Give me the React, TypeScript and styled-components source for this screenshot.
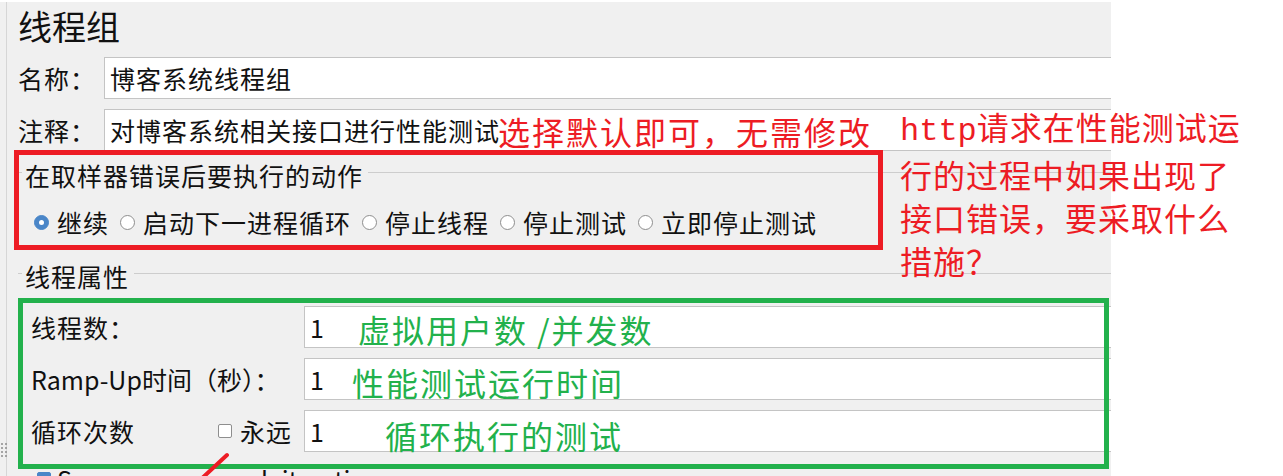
import React from "react";
import styled, { createGlobalStyle } from "styled-components";

const GlobalStyle = createGlobalStyle`
  html, body { margin: 0; padding: 0; background: #ffffff; overflow: hidden; }
  body { font-family: "Noto Sans CJK SC", "Microsoft YaHei", sans-serif; }
`;

const Screen = styled.div`
  position: relative;
  width: 1283px;
  height: 476px;
  overflow: hidden;
  background: #ffffff;
`;

const Window = styled.div`
  display: flex;
  width: 1111px;
  height: 474px;
  margin-top: 2px;
  background: #f0f0f0;
`;

const Splitter = styled.div`
  position: relative;
  flex: none;
  width: 6px;
  border-right: 1px solid #d6d6d6;
`;

const Grip = styled.div`
  position: absolute;
  left: 1px;
  top: 441px;
  display: grid;
  grid-template-columns: repeat(2, 2px);
  gap: 2px;
`;

const GripDot = styled.span`
  width: 2px;
  height: 2px;
  border-radius: 1px;
  background: #8c8c8c;
`;

const Panel = styled.div`
  flex: 1;
  min-width: 0;
  overflow: hidden;
  padding-left: 11px;
  display: flex;
  flex-direction: column;
  color: #111111;
  font-size: 25px;
  letter-spacing: 1px;
  white-space: nowrap;
`;

const Title = styled.h1`
  margin: 0;
  font-size: 34px;
  font-weight: 400;
  line-height: 48px;
  letter-spacing: 0;
`;

const FieldRow = styled.div<{ $mt: number }>`
  display: flex;
  align-items: center;
  margin-top: ${(p) => p.$mt}px;
`;

const LabelCell = styled.div<{ $width: number }>`
  flex: none;
  width: ${(p) => p.$width}px;
  display: flex;
  align-items: center;
  justify-content: space-between;
`;

const Field = styled.div`
  flex: 1;
  min-width: 0;
  height: 42px;
  box-sizing: border-box;
  margin-right: -20px;
  padding-left: 5px;
  background: #ffffff;
  border: 1px solid #c4c4c4;
  display: flex;
  align-items: center;
`;

const Value = styled.span`
  letter-spacing: 0;
`;

const Note = styled.span<{ $color: string; $indent: number; $dy: number }>`
  margin-left: ${(p) => p.$indent}px;
  margin-top: ${(p) => p.$dy}px;
  font-size: 32px;
  line-height: 32px;
  letter-spacing: 2px;
  color: ${(p) => p.$color};
`;

const GroupHeader = styled.div<{ $mt: number }>`
  display: flex;
  align-items: center;
  height: 32px;
  margin-top: ${(p) => p.$mt}px;

  &::before {
    content: "";
    width: 4px;
    height: 1px;
    margin: -6px 3px 0 0;
    background: #cdcdcd;
  }

  &::after {
    content: "";
    flex: 1;
    height: 1px;
    margin: -6px 0 0 5px;
    background: #cdcdcd;
  }
`;

const RadioRow = styled.div`
  display: flex;
  align-items: center;
  gap: 11px;
  height: 36px;
  margin-top: 13px;
  padding-left: 16px;
`;

const RadioOption = styled.label`
  display: flex;
  align-items: center;
  gap: 8px;
`;

const Radio = styled.span<{ $checked?: boolean }>`
  flex: none;
  width: 15px;
  height: 15px;
  box-sizing: border-box;
  border-radius: 50%;
  border: 1px solid ${(p) => (p.$checked ? "#4a86c8" : "#8e8e8e")};
  background: ${(p) => (p.$checked ? "#4a86c8" : "#ffffff")};
  display: flex;
  align-items: center;
  justify-content: center;

  &::after {
    content: "";
    display: ${(p) => (p.$checked ? "block" : "none")};
    width: 5px;
    height: 5px;
    border-radius: 50%;
    background: #ffffff;
  }
`;

const PropsBody = styled.div`
  display: flex;
  flex-direction: column;
  padding-left: 13px;
`;

const CheckGroup = styled.span`
  display: flex;
  align-items: center;
  gap: 8px;
  margin-right: 12px;
`;

const Checkbox = styled.span<{ $checked?: boolean }>`
  flex: none;
  width: 14px;
  height: 14px;
  box-sizing: border-box;
  border-radius: 2px;
  border: 1px solid ${(p) => (p.$checked ? "#4a86c8" : "#8e8e8e")};
  background: ${(p) => (p.$checked ? "#4a86c8" : "#ffffff")};
`;

const CheckRow = styled.div`
  display: flex;
  align-items: center;
  gap: 6px;
  height: 36px;
  margin-top: 9px;
  padding-left: 6px;
  letter-spacing: 0;
`;

const Frame = styled.div<{ $color: string }>`
  position: absolute;
  box-sizing: border-box;
  border: 5px solid ${(p) => p.$color};
  pointer-events: none;
`;

const RedFrame = styled(Frame)`
  left: 14px;
  top: 150px;
  width: 869px;
  height: 100px;
`;

const GreenFrame = styled(Frame)`
  left: 18px;
  top: 298px;
  width: 1091px;
  height: 171px;
`;

const SideNote = styled.div`
  position: absolute;
  left: 900px;
  top: 105px;
  font-size: 32px;
  line-height: 43px;
  letter-spacing: 1px;
  color: #ed1c24;
  white-space: nowrap;
`;

const Mono = styled.span`
  font-family: "Liberation Mono", monospace;
  letter-spacing: 0;
`;

const Arrow = styled.svg`
  position: absolute;
  left: 190px;
  top: 448px;
`;

const RED = "#ed1c24";
const GREEN = "#22b14c";

const actions = [
  { label: "继续", checked: true },
  { label: "启动下一进程循环" },
  { label: "停止线程" },
  { label: "停止测试" },
  { label: "立即停止测试" },
];

export default function App() {
  return (
    <Screen>
      <GlobalStyle />
      <Window>
        <Splitter>
          <Grip>
            {Array.from({ length: 8 }).map((_, i) => (
              <GripDot key={i} />
            ))}
          </Grip>
        </Splitter>
        <Panel>
          <Title>线程组</Title>

          <FieldRow $mt={7}>
            <LabelCell $width={86}>名称：</LabelCell>
            <Field>博客系统线程组</Field>
          </FieldRow>

          <FieldRow $mt={10}>
            <LabelCell $width={86}>注释：</LabelCell>
            <Field>
              对博客系统相关接口进行性能测试
              <Note $color={RED} $indent={-2} $dy={1}>
                选择默认即可，无需修改
              </Note>
            </Field>
          </FieldRow>

          <GroupHeader $mt={8}>在取样器错误后要执行的动作</GroupHeader>
          <RadioRow>
            {actions.map((a) => (
              <RadioOption key={a.label}>
                <Radio $checked={a.checked} />
                {a.label}
              </RadioOption>
            ))}
          </RadioRow>

          <GroupHeader $mt={20}>线程属性</GroupHeader>
          <PropsBody>
            <FieldRow $mt={14}>
              <LabelCell $width={273}>线程数：</LabelCell>
              <Field>
                <Value>1</Value>
                <Note $color={GREEN} $indent={34} $dy={4}>
                  虚拟用户数 /并发数
                </Note>
              </Field>
            </FieldRow>
            <FieldRow $mt={10}>
              <LabelCell $width={273}>
                <Value>Ramp-Up时间（秒）：</Value>
              </LabelCell>
              <Field>
                <Value>1</Value>
                <Note $color={GREEN} $indent={28} $dy={6}>
                  性能测试运行时间
                </Note>
              </Field>
            </FieldRow>
            <FieldRow $mt={10}>
              <LabelCell $width={273}>
                循环次数
                <CheckGroup>
                  <Checkbox />
                  永远
                </CheckGroup>
              </LabelCell>
              <Field>
                <Value>1</Value>
                <Note $color={GREEN} $indent={61} $dy={8}>
                  循环执行的测试
                </Note>
              </Field>
            </FieldRow>
            <CheckRow>
              <Checkbox $checked />
              Same user on each iteration
            </CheckRow>
          </PropsBody>
        </Panel>
      </Window>

      <RedFrame $color={RED} />
      <GreenFrame $color={GREEN} />

      <SideNote>
        <Mono>http</Mono>请求在性能测试运
        <br />
        行的过程中如果出现了
        <br />
        接口错误，要采取什么
        <br />
        措施？
      </SideNote>

      <Arrow width="50" height="40" viewBox="0 0 50 40">
        <line x1="8" y1="34" x2="37" y2="7" stroke={RED} strokeWidth="4" strokeLinecap="round" />
      </Arrow>
    </Screen>
  );
}
